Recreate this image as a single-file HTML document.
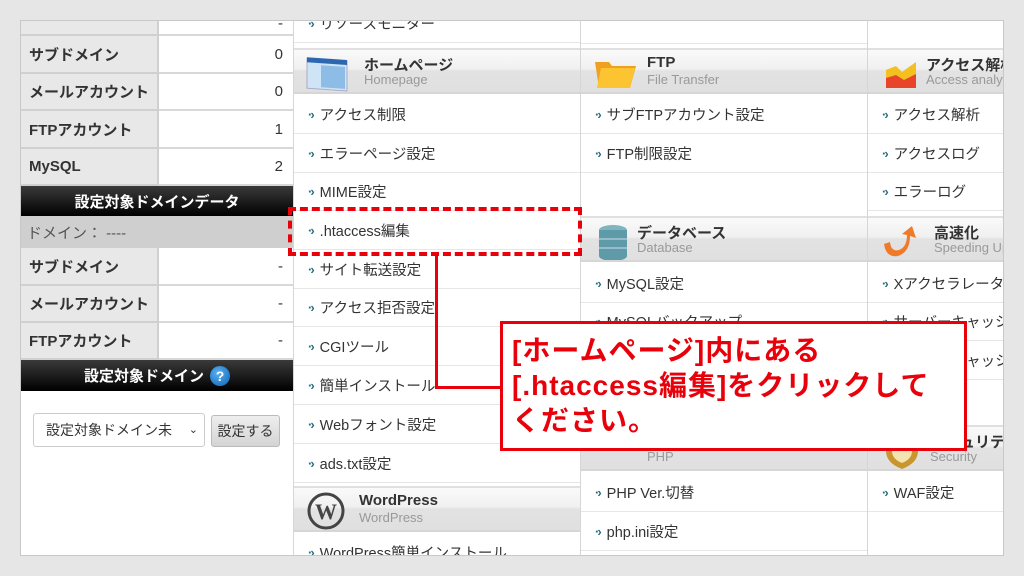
<!DOCTYPE html>
<html><head><meta charset="utf-8"><style>
*{margin:0;padding:0;box-sizing:border-box}
body{width:1024px;height:576px;background:#e6e6e6;position:relative;overflow:hidden;font-family:"Liberation Sans","Noto Sans CJK JP",sans-serif}
.a{position:absolute}
#wrap{position:absolute;left:20px;top:20px;width:984px;height:536px;background:#fff;border:1px solid #c8c8c8;overflow:hidden}
.lab{position:absolute;left:0;width:138px;background:#e8e8e8;border-bottom:2px solid #d0d0d0;border-right:2px solid #d0d0d0;font-size:15px;font-weight:bold;color:#333;padding-left:8px;display:flex;align-items:center}
.val{position:absolute;left:138px;width:134px;background:#fff;border-bottom:2px solid #d8d8d8;font-size:15px;color:#333;text-align:right;padding-right:10px;display:flex;align-items:center;justify-content:flex-end}
.blk{position:absolute;left:0;width:272px;background:linear-gradient(#3a3a3a,#000);color:#fff;font-weight:bold;font-size:15px;text-align:center;display:flex;align-items:center;justify-content:center}
.it{position:absolute;height:38px;border-bottom:1px solid #e6e6e6;font-size:14.5px;color:#333;display:flex;align-items:center;padding-left:14px;white-space:nowrap;overflow:hidden}
.it:before{content:"·›";color:#2a6f80;font-weight:bold;font-size:13px;margin-right:7px;letter-spacing:-2px}
.hd{position:absolute;height:46px;background:linear-gradient(#fafafa 0%,#f0f0f0 45%,#e2e2e2 50%,#e0e0e0 100%);border-top:2px solid #e0e0e0;border-bottom:2px solid #d6d6d6;overflow:hidden;white-space:nowrap}
.hd b{position:absolute;top:4px;font-size:15px;color:#333}
.hd i{position:absolute;top:22px;font-style:normal;font-size:13px;color:#999}
.vl{position:absolute;top:0;width:1px;height:536px;background:#d6d6d6}
</style></head><body>
<div id="wrap">
<div class="lab" style="top:-8px;height:23px"></div><div class="val" style="top:-8px;height:23px">-</div>
<div class="lab" style="top:15px;height:38px">サブドメイン</div><div class="val" style="top:15px;height:38px">0</div>
<div class="lab" style="top:53px;height:37px">メールアカウント</div><div class="val" style="top:53px;height:37px">0</div>
<div class="lab" style="top:90px;height:38px">FTPアカウント</div><div class="val" style="top:90px;height:38px">1</div>
<div class="lab" style="top:128px;height:37px">MySQL</div><div class="val" style="top:128px;height:37px">2</div>
<div class="blk" style="top:165px;height:30px">設定対象ドメインデータ</div>
<div class="a" style="left:0;top:195px;width:272px;height:32px;background:#cfcfcf;font-size:15px;color:#555;padding-left:6px;display:flex;align-items:center">ドメイン： ----</div>
<div class="lab" style="top:227px;height:38px">サブドメイン</div><div class="val" style="top:227px;height:38px">-</div>
<div class="lab" style="top:265px;height:37px">メールアカウント</div><div class="val" style="top:265px;height:37px">-</div>
<div class="lab" style="top:302px;height:37px">FTPアカウント</div><div class="val" style="top:302px;height:37px">-</div>
<div class="blk" style="top:339px;height:31px">設定対象ドメイン <span style="display:inline-block;width:20px;height:20px;border-radius:50%;background:radial-gradient(circle at 40% 35%,#5ab0f0,#0b64b8);color:#fff;font-size:14px;line-height:20px;margin-left:6px">?</span></div>
<div class="a" style="left:12px;top:392px;width:172px;height:34px;border:1px solid #ccc;border-radius:3px;font-size:14px;color:#333;padding-left:12px;line-height:32px">設定対象ドメイン未 <span style="position:absolute;right:6px;font-size:11px">⌄</span></div>
<div class="a" style="left:190px;top:394px;width:69px;height:32px;border:1px solid #bbb;border-radius:3px;background:linear-gradient(#eee,#d4d4d4);font-size:14px;color:#333;text-align:center;line-height:30px">設定する</div>
<div class="vl" style="left:272px"></div>
<div class="vl" style="left:559px"></div>
<div class="vl" style="left:846px"></div>

<!-- column 2 -->
<div class="it" style="left:273px;top:-16px;width:286px">リソースモニター</div>
<div class="hd" style="left:273px;top:27px;width:286px"><svg class="a" style="left:10px;top:4px" width="46" height="38"><rect x="3" y="4" width="40" height="30" fill="#cfe4f5" stroke="#aac" transform="skewY(4)"/><rect x="3" y="3" width="40" height="5" fill="#2c67b0" transform="skewY(4)"/><rect x="17" y="10" width="24" height="22" fill="#8dbde6" transform="skewY(4)"/></svg><b style="left:70px">ホームページ</b><i style="left:70px">Homepage</i></div>
<div class="it" style="left:273px;top:75px;width:286px">アクセス制限</div>
<div class="it" style="left:273px;top:114px;width:286px">エラーページ設定</div>
<div class="it" style="left:273px;top:152px;width:286px">MIME設定</div>
<div class="it" style="left:273px;top:191px;width:286px">.htaccess編集</div>
<div class="it" style="left:273px;top:230px;width:286px">サイト転送設定</div>
<div class="it" style="left:273px;top:268px;width:286px">アクセス拒否設定</div>
<div class="it" style="left:273px;top:307px;width:286px">CGIツール</div>
<div class="it" style="left:273px;top:346px;width:286px">簡単インストール</div>
<div class="it" style="left:273px;top:385px;width:286px">Webフォント設定</div>
<div class="it" style="left:273px;top:424px;width:286px">ads.txt設定</div>
<div class="hd" style="left:273px;top:465px;width:286px"><svg class="a" style="left:12px;top:4px" width="40" height="38"><circle cx="20" cy="19" r="17" fill="none" stroke="#444" stroke-width="3"/><text x="20" y="27" font-size="22" font-family="Liberation Serif" text-anchor="middle" fill="#444" font-weight="bold">W</text></svg><b style="left:65px">WordPress</b><i style="left:65px">WordPress</i></div>
<div class="it" style="left:273px;top:513px;width:286px">WordPress簡単インストール</div>

<!-- column 3 -->
<div class="a" style="left:560px;top:22px;width:286px;height:1px;background:#e6e6e6"></div>
<div class="hd" style="left:560px;top:27px;width:286px"><svg class="a" style="left:12px;top:6px" width="46" height="34"><path d="M2 6h14l3 4h24l-6 22H6z" fill="#f0a020"/><path d="M8 12h34l-5 20H4z" fill="#fbc430"/></svg><b style="left:66px">FTP</b><i style="left:66px">File Transfer</i></div>
<div class="it" style="left:560px;top:75px;width:286px">サブFTPアカウント設定</div>
<div class="it" style="left:560px;top:114px;width:286px">FTP制限設定</div>
<div class="hd" style="left:560px;top:195px;width:286px"><svg class="a" style="left:16px;top:4px" width="36" height="40"><ellipse cx="16" cy="8" rx="14" ry="5" fill="#7fb5c0"/><rect x="2" y="8" width="28" height="26" fill="#5f9aa8"/><ellipse cx="16" cy="34" rx="14" ry="5" fill="#5f9aa8"/><path d="M2 17h28M2 26h28" stroke="#cde" /></svg><b style="left:56px">データベース</b><i style="left:56px">Database</i></div>
<div class="it" style="left:560px;top:244px;width:286px">MySQL設定</div>
<div class="it" style="left:560px;top:282px;width:286px">MySQLバックアップ</div>
<div class="hd" style="left:560px;top:404px;width:286px"><svg class="a" style="left:10px;top:0" width="46" height="30"><ellipse cx="23" cy="10" rx="22" ry="14" fill="#1e7a95"/></svg><b style="left:66px">PHP</b><i style="left:66px">PHP</i></div>
<div class="it" style="left:560px;top:453px;width:286px">PHP Ver.切替</div>
<div class="it" style="left:560px;top:492px;width:286px">php.ini設定</div>

<!-- column 4 -->
<div class="hd" style="left:847px;top:27px;width:140px"><svg class="a" style="left:16px;top:6px" width="36" height="34"><path d="M2 14l10-4 6 6 14-10v26H2z" fill="#f3c020"/><path d="M2 22l10-3 8 5 12-6v14H2z" fill="#e8442a"/></svg><b style="left:58px">アクセス解析</b><i style="left:58px">Access analytics</i></div>
<div class="it" style="left:847px;top:75px;width:140px">アクセス解析</div>
<div class="it" style="left:847px;top:114px;width:140px">アクセスログ</div>
<div class="it" style="left:847px;top:152px;width:140px">エラーログ</div>
<div class="hd" style="left:847px;top:195px;width:140px"><svg class="a" style="left:12px;top:6px" width="40" height="36"><path d="M4 20q2 14 14 12q12-4 12-20l6 2-4-12-10 8 5 1q0 12-8 15q-8 2-9-8z" fill="#ee7a2a"/></svg><b style="left:66px">高速化</b><i style="left:66px">Speeding Up</i></div>
<div class="it" style="left:847px;top:244px;width:140px">Xアクセラレータ</div>
<div class="it" style="left:847px;top:282px;width:140px">サーバーキャッシュ</div>
<div class="it" style="left:847px;top:321px;width:140px">ブラウザキャッシュ</div>
<div class="hd" style="left:847px;top:404px;width:140px"><svg class="a" style="left:16px;top:0" width="36" height="44"><path d="M2 10h32v14q0 12-16 18Q2 36 2 24z" fill="#c9962e"/><path d="M8 14h20v10q0 8-10 12Q8 32 8 24z" fill="#f3e3b0"/></svg><b style="left:62px">セキュリティ</b><i style="left:62px">Security</i></div>
<div class="it" style="left:847px;top:453px;width:140px">WAF設定</div>
</div>

<!-- annotations -->
<div class="a" style="left:288px;top:207px;width:294px;height:49px;border:4px dashed #e8000a"></div>
<div class="a" style="left:435px;top:256px;width:3px;height:133px;background:#e8000a"></div>
<div class="a" style="left:435px;top:386px;width:66px;height:3px;background:#e8000a"></div>
<div class="a" style="left:500px;top:321px;width:467px;height:130px;border:3px solid #e8000a;background:#fff;color:#e8000a;font-weight:bold;font-size:28px;letter-spacing:1px;line-height:35px;padding:9px 0 0 9px;white-space:nowrap">[ホームページ]内にある<br>[.htaccess編集]をクリックして<br>ください。</div>
</body></html>
